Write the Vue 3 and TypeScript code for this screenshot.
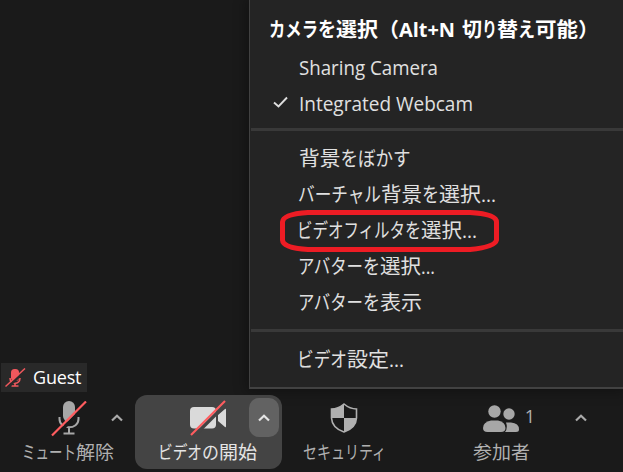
<script setup lang="ts">
interface Run {
  t: string
  x: number
  w: number
}
interface Item {
  id: string
  runs: Run[]
  checked?: boolean
  marked?: boolean
}

const r = (t: string, x: number, w: number): Run => ({ t, x, w })

const title: Run[] = [
  r('カメラ', 0, 49), r('を', 49, 18), r('選択', 67, 42), r('（', 109, 21), r('Alt+N', 130, 56),
  r('切', 193, 20), r('り', 213, 15), r('替', 228, 21), r('え', 249, 17),
  r('可能', 266, 43), r('）', 309, 21),
]

const groups: Item[][] = [
  [
    { id: 'sharing', runs: [r('Sharing Camera', 0, 139)] },
    { id: 'webcam', runs: [r('Integrated Webcam', 0, 174)], checked: true },
  ],
  [
    { id: 'blur', runs: [r('背景', 0, 41.5), r('をぼかす', 41.5, 70)] },
    { id: 'virtual', runs: [r('バーチャル', -1, 83), r('背景', 82, 41), r('を', 123, 17), r('選択', 140, 42), r('...', 182, 15)] },
    { id: 'filter', runs: [r('ビデオフィルタ', -2, 108), r('を', 106, 16), r('選択', 122, 41), r('...', 163, 15)], marked: true },
    { id: 'avatar', runs: [r('アバター', -1, 65), r('を', 64, 17), r('選択', 81, 41), r('...', 122, 14)] },
    { id: 'show', runs: [r('アバター', -1, 65), r('を', 64, 17), r('表示', 81, 42)] },
  ],
  [{ id: 'settings', runs: [r('ビデオ', -2, 50), r('設定', 48, 42), r('...', 90, 15)] }],
]

const labels: Record<string, Run[]> = {
  audio: [r('ミュート', 0, 54), r('解除', 54, 38)],
  video: [r('ビデオ', 0, 44), r('の', 44, 17), r('開始', 61, 38)],
  security: [r('セキュリティ', 0, 83)],
  people: [r('参加者', 0, 57)],
}
</script>

<template>
  <main class="screen">
    <section class="stage">
      <div class="guest">
        <svg class="guest-mic" width="21" height="20" viewBox="0 0 21 20">
          <rect x="6" y="1" width="8" height="12" rx="3.500" fill="#f0585d" />
          <path d="M5 10c0 7 10 7 10 0M10 15v3M6.500 18h7" fill="none" stroke="#f0585d" stroke-width="1.600" />
          <path d="M1.500 20.500L21 2" stroke="#292929" stroke-width="2.500" />
          <path d="M.5 18.500L20 .5" stroke="#f0585d" stroke-width="1.500" />
        </svg>
        <span class="guest-name">Guest</span>
      </div>
      <nav class="menu">
        <svg class="title" width="340" height="30">
          <text v-for="run in title" :key="run.x" :x="run.x" y="22" :textLength="run.w" lengthAdjust="spacingAndGlyphs">{{ run.t }}</text>
        </svg>
        <div v-for="(group, g) in groups" :key="g" class="group">
          <div v-for="item in group" :key="item.id" class="item">
            <span class="check">
              <svg v-if="item.checked" width="16" height="14" viewBox="0 0 16 14">
                <path d="M2 6.500L6.500 10.500L15 1.500" fill="none" stroke="#dedede" stroke-width="1.900" />
              </svg>
            </span>
            <svg class="label" width="210" height="36">
              <text v-for="run in item.runs" :key="run.x" :x="run.x" :y="g === 0 ? 25 : 26" :textLength="run.w" lengthAdjust="spacingAndGlyphs">{{ run.t }}</text>
            </svg>
            <svg v-if="item.marked" class="mark" width="219" height="42" viewBox="0 0 219 42">
              <path d="M28 2.500H190Q216.500 4 216.500 12V30Q215 37 190 39.500H28Q3 38 2.500 30V12Q3 4 28 2.500Z" fill="none" stroke="#ed1c24" stroke-width="5" />
            </svg>
          </div>
        </div>
      </nav>
    </section>
    <footer class="bar">
      <div class="tool audio">
        <svg class="icon" width="36" height="36" viewBox="0 0 36 36">
          <rect x="12" y="0" width="12" height="21" rx="6" fill="#a7a7a7" />
          <path d="M8.500 16v2c0 11 19 11 19 0v-2M18 26v6M12.500 32.500h11" fill="none" stroke="#a7a7a7" stroke-width="2" />
          <path d="M2.500 37L36.500 3" stroke="#1a1a1a" stroke-width="3.500" />
          <path d="M1 34.500L35 .5" stroke="#ff5c5f" stroke-width="2.200" />
        </svg>
        <svg class="caption" width="94" height="26">
          <text v-for="run in labels.audio" :key="run.x" :x="run.x" y="19" :textLength="run.w" lengthAdjust="spacingAndGlyphs">{{ run.t }}</text>
        </svg>
      </div>
      <svg class="caret first" width="12" height="8" viewBox="0 0 12 8"><path d="M1 6.500L6 1.700L11 6.500" /></svg>
      <div class="tool video">
        <svg class="icon" width="38" height="36" viewBox="0 0 38 36">
          <rect x="1" y="7" width="26" height="21.500" rx="4" fill="#dadada" />
          <path d="M29 15L36 9q1-1 1 1v16q0 2-1 1L29 21Z" fill="#dadada" />
          <path d="M4 37L38 3" stroke="#444" stroke-width="3.500" />
          <path d="M2 35L36 1" stroke="#ff5c5f" stroke-width="2.200" />
        </svg>
        <svg class="caption" width="100" height="26">
          <text v-for="run in labels.video" :key="run.x" :x="run.x" y="19" :textLength="run.w" lengthAdjust="spacingAndGlyphs">{{ run.t }}</text>
        </svg>
        <span class="expand">
          <svg class="caret" width="12" height="8" viewBox="0 0 12 8"><path d="M1 6.500L6 1.700L11 6.500" /></svg>
        </span>
      </div>
      <div class="tool security">
        <svg class="icon" width="28" height="32" viewBox="0 0 28 32">
          <path d="M14 2Q20 7 26.500 7V16Q26 26 14 30Q2 26 1.500 16V7Q8 7 14 2Z" fill="#1a1a1a" stroke="#b0b0b0" stroke-width="1.600" />
          <path d="M14 2V16H1.500V7Q8 7 14 2ZM14 16H26.500Q26 26 14 30Z" fill="#b0b0b0" />
        </svg>
        <svg class="caption" width="84" height="26">
          <text v-for="run in labels.security" :key="run.x" :x="run.x" y="19" :textLength="run.w" lengthAdjust="spacingAndGlyphs">{{ run.t }}</text>
        </svg>
      </div>
      <div class="tool people">
        <div class="count-row">
          <svg width="37" height="28" viewBox="0 0 37 28">
            <circle cx="11.500" cy="6.500" r="6.200" fill="#a7a7a7" />
            <circle cx="26" cy="9" r="5.700" fill="#a7a7a7" />
            <path d="M23 17.500H28Q36 18 36 24.500Q36 27 33 27H22Q25 23 23 17.500Z" fill="#a7a7a7" />
            <path d="M8 15.500H15Q22.500 17 22.500 23Q22.500 27 18 27H4.500Q0 27 0 23Q0 17 8 15.500Z" fill="#a7a7a7" />
          </svg>
          <span class="count">1</span>
        </div>
        <svg class="caption" width="58" height="26">
          <text v-for="run in labels.people" :key="run.x" :x="run.x" y="19" :textLength="run.w" lengthAdjust="spacingAndGlyphs">{{ run.t }}</text>
        </svg>
      </div>
      <svg class="caret last" width="12" height="8" viewBox="0 0 12 8"><path d="M1 6.500L6 1.700L11 6.500" /></svg>
    </footer>
  </main>
</template>

<style>
body {
  margin: 0;
  background: #1a1a1a;
}
</style>

<style scoped>
.screen {
  width: 623px;
  height: 472px;
  overflow: hidden;
  display: flex;
  flex-direction: column;
  background: #1a1a1a;
  font-family: "Open Sans", "Noto Sans CJK JP", sans-serif;
}
svg {
  display: block;
  flex: none;
}
.stage {
  height: 392px;
  flex: none;
  display: flex;
  justify-content: space-between;
}
.guest {
  box-sizing: border-box;
  width: 86px;
  height: 29px;
  margin: 363px 0 0 1px;
  padding-left: 4px;
  display: flex;
  align-items: center;
  gap: 7px;
  background: #292929;
}
.guest-name {
  color: #fff;
  font-size: 18px;
  line-height: 26px;
  margin-top: -2px;
  letter-spacing: -0.2px;
}
.menu {
  box-sizing: border-box;
  width: 374px;
  height: 389px;
  padding-top: 15px;
  background: #242424;
  border-left: 1px solid #424242;
  border-bottom: 2px solid #424242;
  box-shadow: 0 0 12px 3px rgba(0, 0, 0, 0.3);
}
.title {
  margin-left: 19px;
  height: 35px;
  fill: #fff;
  font-size: 20px;
  font-weight: 700;
  overflow: visible;
}
.group {
  padding-bottom: 6px;
}
.group + .group {
  border-top: 3px solid #393939;
  margin-left: 1px;
  padding-top: 9px;
  padding-bottom: 9px;
}
.group + .group .item {
  margin-left: -1px;
}
.item {
  position: relative;
  height: 36px;
  display: flex;
}
.check {
  box-sizing: border-box;
  width: 49px;
  padding: 10px 0 0 22px;
}
.label {
  fill: #e0e0e0;
  font-size: 20px;
  overflow: visible;
}
.mark {
  position: absolute;
  left: 30px;
  top: -2px;
}
.bar {
  position: relative;
  height: 80px;
  flex: none;
  display: flex;
  align-items: flex-start;
}
.tool {
  box-sizing: border-box;
  display: flex;
  flex-direction: column;
  align-items: center;
  height: 80px;
}
.caption {
  fill: #b0b0b0;
  font-size: 18.500px;
  overflow: visible;
}
.audio {
  width: 94px;
  margin-left: 22px;
  padding-top: 9px;
}
.audio .caption {
  margin-top: 3px;
}
.caret {
  fill: none;
  stroke: #aaa;
  stroke-width: 2.2;
}
.first {
  margin: 22px 0 0 -5px;
}
.video {
  position: relative;
  width: 147px;
  height: 74px;
  margin: 3px 0 0 12px;
  padding-top: 5px;
  border-radius: 12px;
  background: #444;
}
.video .icon {
  margin-right: 2px;
}
.video .caption {
  margin: 4px 2px 0 0;
  fill: #e5e5e5;
}
.expand {
  position: absolute;
  right: 3px;
  top: 3px;
  width: 30px;
  height: 39px;
  display: flex;
  align-items: center;
  justify-content: center;
  border-radius: 10px;
  background: #626262;
}
.expand .caret {
  stroke: #e5e5e5;
}
.security {
  width: 84px;
  margin-left: 21px;
  padding-top: 10px;
}
.security .icon {
  margin-right: 2px;
}
.security .caption {
  margin-top: 6px;
}
.people {
  width: 59px;
  margin-left: 86px;
  padding-top: 13px;
}
.people .caption {
  margin: 7px 2px 0 0;
}
.count-row {
  display: flex;
  height: 28px;
  gap: 5px;
  margin-left: 13px;
}
.count {
  color: #b0b0b0;
  font-size: 18px;
  line-height: 22px;
}
.last {
  margin: 22px 0 0 43px;
}
</style>
